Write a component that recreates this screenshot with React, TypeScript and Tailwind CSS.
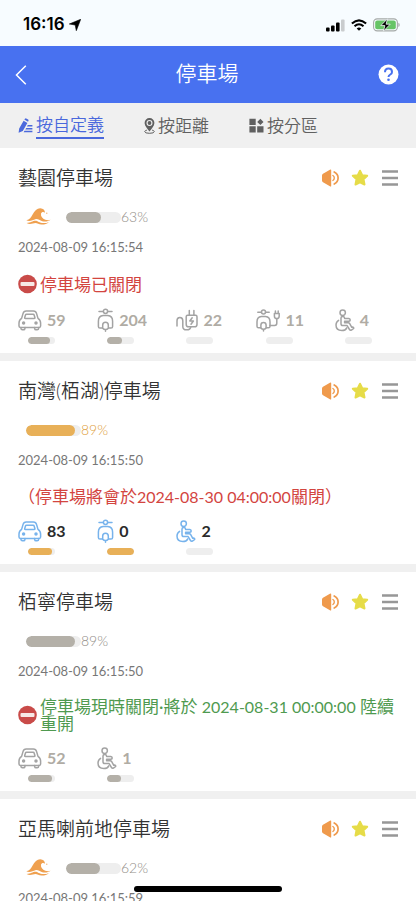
import type { ReactNode } from 'react';
import clsx from 'clsx';

type SpotType = 'car' | 'moto' | 'ev' | 'evMoto' | 'disabled';

interface Spot {
    type: SpotType;
    count: number;
    level: number;
}

interface CarPark {
    name: string;
    wave?: boolean;
    open?: boolean;
    percent: number;
    updated: string;
    message?: string;
    messageColor?: 'red' | 'green';
    closedSign?: boolean;
    spots: Spot[];
}

const carParks: CarPark[] = [
    {
        name: '藝園停車場',
        wave: true,
        percent: 63,
        updated: '2024-08-09 16:15:54',
        message: '停車場已關閉',
        messageColor: 'red',
        closedSign: true,
        spots: [
            { type: 'car', count: 59, level: 83 },
            { type: 'moto', count: 204, level: 54 },
            { type: 'ev', count: 22, level: 0 },
            { type: 'evMoto', count: 11, level: 0 },
            { type: 'disabled', count: 4, level: 0 },
        ],
    },
    {
        name: '南灣(栢湖)停車場',
        open: true,
        percent: 89,
        updated: '2024-08-09 16:15:50',
        message: '（停車場將會於2024-08-30 04:00:00關閉）',
        messageColor: 'red',
        spots: [
            { type: 'car', count: 83, level: 88 },
            { type: 'moto', count: 0, level: 100 },
            { type: 'disabled', count: 2, level: 0 },
        ],
    },
    {
        name: '栢寧停車場',
        percent: 89,
        updated: '2024-08-09 16:15:50',
        message: '停車場現時關閉·將於 2024-08-31 00:00:00 陸續重開',
        messageColor: 'green',
        closedSign: true,
        spots: [
            { type: 'car', count: 52, level: 90 },
            { type: 'disabled', count: 1, level: 50 },
        ],
    },
    {
        name: '亞馬喇前地停車場',
        wave: true,
        percent: 62,
        updated: '2024-08-09 16:15:59',
        spots: [],
    },
];

function LineIcon({ width, height, children }: { width: number; height: number; children: ReactNode }) {
    return (
        <svg
            width={width}
            height={height}
            viewBox={`0 0 ${width} ${height}`}
            fill="none"
            stroke="currentColor"
            strokeWidth="1.5"
            strokeLinecap="round"
            strokeLinejoin="round"
            className="shrink-0"
        >
            {children}
        </svg>
    );
}

const spotIcons: Record<SpotType, ReactNode> = {
    car: (
        <LineIcon width={24} height={21}>
            <path d="M3.600 8.400 5 3.600Q5.700 1 8.200 1h7.200q2.500 0 3.200 2.600l1.400 4.800q2.600 1.600 2.600 4.600v3q0 1.400-1.400 1.400H2.400Q1 17.400 1 16v-3q0-3 2.600-4.600z" />
            <path d="M8.500 4.300h6.600q.8 0 1 .8l.8 2.500q.2.800-.7.800H7.400q-.9 0-.7-.8l.8-2.500q.2-.8 1-.8z" />
            <path d="M3 17.600v.8q0 1.400 1.400 1.400h1.200q1.200 0 1.300-1.200l.1-1M20.600 17.600v.8q0 1.400-1.400 1.400H18q-1.200 0-1.300-1.200l-.1-1" />
            <circle cx="5.600" cy="13" r="1" fill="currentColor" />
            <circle cx="18" cy="13" r="1" fill="currentColor" />
        </LineIcon>
    ),
    moto: (
        <LineIcon width={17} height={24}>
            <path d="M2 3.400h4.200M10.800 3.400H15" />
            <circle cx="8.500" cy="3.300" r="2.100" />
            <path d="M5.200 20H3q-1.600 0-1.600-1.600v-5.200q0-5.200 4.800-5.600h4.600q4.800.4 4.800 5.600v5.200q0 1.600-1.600 1.600h-2.200" />
            <path d="M5.700 20.200V17q0-2.800 2.800-2.800t2.800 2.800v3.200q-1.100 1.300-2.800 1.300t-2.800-1.300zM8.500 21.600v1.600" />
        </LineIcon>
    ),
    ev: (
        <LineIcon width={22} height={22}>
            <path d="M1 17v-5.200q0-3.400 2.900-3.400t2.900 3.400v5.600q0 3.400 3.800 3.400t4.200-3" />
            <path d="M11.600 6.200h8q1.400 0 1.400 1.600v7.400q0 2.600-2.400 2.600h-6q-2.400 0-2.400-2.600V7.800q0-1.600 1.400-1.600zM13.300 6V1.600M17.900 6V1.600" />
            <path d="M16.200 8.800 13.800 12h3.600L15 15.200" />
        </LineIcon>
    ),
    evMoto: (
        <LineIcon width={25} height={23}>
            <path d="M1.800 3.200H5.400M9.600 3.200h3.600" />
            <circle cx="7.500" cy="3" r="2" />
            <path d="M4.600 18.800H2.600Q1 18.800 1 17.200v-4.400q0-4.800 4.400-5.200h4.200q4.400.4 4.400 5.200v4.400q0 1.600-1.600 1.600h-2" />
            <path d="M4.900 19v-3q0-2.600 2.600-2.600t2.600 2.600v3q-1 1.300-2.600 1.300T4.900 19zM7.500 20.400V22" />
            <path d="M14 16.400h4.600q2.200 0 2.200-2.200V9.600M18.400 4.600h4.800v2.400q0 2.600-2.400 2.600t-2.400-2.600zM19.400 4.400V2M22.200 4.400V2" />
        </LineIcon>
    ),
    disabled: (
        <LineIcon width={20} height={23}>
            <circle cx="7.700" cy="3.700" r="2.700" />
            <path d="M6 9q0-1.400 1.700-1.400T9.600 9v.6h4.200q1.400.2 1.400 1.300t-1.400 1.300H9.600v1.600h3.600q1 0 1.500.9l2.100 3.600 1-.3q1.200.4.900 1.500l-2.300 1.600q-1.200.5-1.900-.6l-2.400-3.900H7.800Q6 16.600 6 14.800z" />
            <path d="M3.600 11.400Q1 13 1 16.100q0 5.500 5.900 5.500 3.500 0 4.900-2.800" />
        </LineIcon>
    ),
};

function WaveIcon() {
    return (
        <svg width="25" height="17" viewBox="0 0 25 17" fill="#efa04f" className="mr-[15px] mb-[2px] shrink-0">
            <path d="M.3 12.200C3.800 11.400 5 9.400 6.600 6.400 8.600 2.600 11.200.1 14.300.2c2.900.1 4.700 2 4.700 4.500-1.300-1.200-3.600-1-4 1-.4 2.600 1.500 5 4.300 6 1.900.6 3.700.5 5.300.1-2.300 1.600-5.400 2.300-8.300 1.400-2.800-.9-4.300-2.500-6.900-2-2.500.5-5.600 2.800-9.100 1z" />
            <path d="M.6 15c4.300 0 6-2.200 8.700-2.200 2.500 0 3.800 2.300 8.400 2.300 2.100 0 3.600-.4 5.200-.9-1.900 1.900-4.600 2.500-7.300 2.400-2.800-.1-4.200-1.600-6.200-1.600-2.400 0-5.200 2.300-8.800 0z" />
            <circle cx="20.800" cy="5.200" r=".6" />
        </svg>
    );
}

function ClosedSign() {
    return (
        <svg width="19" height="20" viewBox="0 0 19 20" className="shrink-0">
            <circle cx="9.500" cy="10" r="9.300" fill="#c94b49" />
            <rect x="2.500" y="8" width="14" height="4" rx="1" fill="#f7e9e6" />
        </svg>
    );
}

function CardActions() {
    return (
        <div className="flex items-center gap-3">
            <button type="button" aria-label="語音">
                <svg width="18" height="18" viewBox="0 0 18 18" fill="none" stroke="#ef9a4c" strokeLinecap="round" className="block">
                    <path d="M2 4.800 8.900.7Q10.200 0 10.200 1.300v15.400q0 1.300-1.300.6L2 13.200Q1 12.700 1 11.600V6.400q0-1.100 1-1.600z" fill="#ef9a4c" stroke="none" />
                    <path d="M11.900 6.500q1.400.8 1.400 2.500t-1.400 2.500" strokeWidth="1.400" />
                    <path d="M13.200 3q3.900 1.900 3.900 6t-3.900 6" strokeWidth="1.700" />
                </svg>
            </button>
            <button type="button" aria-label="收藏">
                <svg width="18" height="18" viewBox="0 0 18 18" fill="#e6dc48" stroke="#e6dc48" strokeWidth="2" strokeLinejoin="round" className="block">
                    <path d="m9 1.700 2.200 4.500 5 .6-3.700 3.500 1 5.200L9 13.300l-4.500 2.200 1-5.200L1.800 6.800l5-.6z" />
                </svg>
            </button>
            <button type="button" aria-label="選單">
                <svg width="18" height="18" viewBox="0 0 18 18" fill="#979797" className="block">
                    <path d="M1 1.300h16v2.400H1zM1 7.800h16v2.400H1zM1 14.300h16v2.400H1z" />
                </svg>
            </button>
        </div>
    );
}

function Bar({ level, open, className }: { level: number; open?: boolean; className: string }) {
    return (
        <div className={clsx('overflow-hidden rounded-full bg-[#eeeeee]', className)}>
            <div
                className={clsx('h-full rounded-full', open ? 'bg-[#e8b058]' : 'bg-[#b4b0a8]')}
                style={{ width: `${level}%` }}
            />
        </div>
    );
}

// Dates are set a little smaller than the Chinese text around them
function Message({ text, color }: { text: string; color?: 'red' | 'green' }) {
    const parts = text.split(/([\d-]+ [\d:]+)/);

    return (
        <p className={clsx('text-[17px] leading-[17px]', color === 'green' ? 'text-[#4f9a50]' : 'text-[#d3453f]')}>
            {parts.map((part, i) => (i % 2 ? <span key={i} className="text-base leading-[17px]">{part}</span> : part))}
        </p>
    );
}

function CarParkCard({ park }: { park: CarPark }) {
    return (
        <li className="bg-white pt-4 pb-[9px]">
            <div className="flex h-7 items-center justify-between pr-[17px] pl-[18px]">
                <h2 className="text-[19px] leading-7 font-[350] text-[#333]">{park.name}</h2>
                <CardActions />
            </div>

            <div className="mt-[15px] flex h-5 items-center pl-[26px]">
                {park.wave && <WaveIcon />}
                <Bar level={park.percent} open={park.open} className="h-[11px] w-[55px]" />
                <span className={clsx('text-sm font-light', park.open ? 'text-[#e0a03c]' : 'text-[#928e87]')}>
                    {park.percent}%
                </span>
            </div>

            <p className="mt-[10px] pl-[18px] text-[13px] leading-5 text-[#777]">{park.updated}</p>

            {park.message && (
                <div className="mt-[17px] flex min-h-[18px] items-center gap-[3px] pr-4 pl-[18px]">
                    {park.closedSign && <ClosedSign />}
                    <Message text={park.message} color={park.messageColor} />
                </div>
            )}

            {park.spots.length > 0 && (
                <ul className="mt-[14px] grid grid-cols-5 pr-[2px] pl-[18px]">
                    {park.spots.map((spot) => (
                        <li key={spot.type}>
                            <div className={clsx('flex h-6 items-center gap-[5px]', park.open ? 'text-[#77b3ec]' : 'text-[#a3a3a3]')}>
                                {spotIcons[spot.type]}
                                <span className={clsx('text-base font-bold', park.open ? 'text-[#2b2b2b]' : 'text-[#b0aca4]')}>
                                    {spot.count}
                                </span>
                            </div>
                            <Bar level={spot.level} open={park.open} className="mt-[5px] ml-[10px] h-[7px] w-[27px]" />
                        </li>
                    ))}
                </ul>
            )}
        </li>
    );
}

function StatusBar() {
    return (
        <div className="flex h-[46px] shrink-0 items-center justify-between bg-[#f7fcff] pt-1 pr-4 pl-[23px] text-black">
            <div className="flex items-center gap-1">
                <span className="font-['Inter',sans-serif] text-[17px] font-semibold">16:16</span>
                <svg width="12" height="12" viewBox="0 0 12 12" fill="currentColor">
                    <path d="M11.700.3 7.300 11.700 6.200 6 .3 5z" stroke="currentColor" strokeWidth=".6" strokeLinejoin="round" />
                </svg>
            </div>
            <div className="flex items-center gap-[6px]">
                <svg width="19" height="13" viewBox="0 0 19 13" fill="currentColor">
                    <rect y="8.500" width="3.600" height="4" rx="1" />
                    <rect x="5" y="6.500" width="3.600" height="6" rx="1" />
                    <rect x="10" y="3.500" width="3.600" height="9" rx="1" />
                    <rect x="15" y=".5" width="3.600" height="12" rx="1" fill="#c9ccce" />
                </svg>
                <svg width="16" height="12" viewBox="0 0 16 12" fill="none" stroke="currentColor" strokeWidth="2.100">
                    <path d="M.9 4.500q7.100-6.400 14.200 0M3.500 7.200q4.500-3.900 9 0" />
                    <path d="M8 11.700 5.700 9.400q2.300-1.900 4.600 0z" fill="currentColor" stroke="none" />
                </svg>
                <svg width="27" height="14" viewBox="0 0 27 14">
                    <rect x=".6" y=".9" width="23.800" height="12" rx="3.600" fill="none" stroke="#a5a9a8" strokeWidth="1.100" />
                    <rect x="2.200" y="2.500" width="20.600" height="8.800" rx="2" fill="#66c466" />
                    <path d="M25.400 4.800q1.300.5 1.300 2.100t-1.300 2.100z" fill="#a5a9a8" />
                    <path d="M14.500.8 7.800 7.600h4.100l-1.500 5.600 6.800-7h-4.100z" fill="#000" stroke="#f7fcff" strokeWidth=".8" />
                </svg>
            </div>
        </div>
    );
}

function Tabs() {
    return (
        <nav className="flex h-[45px] shrink-0 items-center gap-10 bg-[#f0f0f0] pl-[18px] text-[17px] font-[350] text-[#606060]">
            <button type="button" className="flex items-center gap-[3px] text-[#4a68dc]">
                <svg width="15" height="15" viewBox="0 0 15 15" fill="currentColor">
                    <path d="m5.600 2.800 3.800 2.200-4.600 7.900L.6 14.800l.6-4.200zM6.300 1.600 7 .7q.5-.6 1.200-.2l1.900 1.100q.7.500.4 1.200l-.5 1z" />
                    <path d="M9.800 7h4.600v1.500H8.900zM8.200 9.900h6.200v1.500H7.300zM6.500 12.800h7.900v1.500H5.600z" />
                </svg>
                <span className="border-b-2 border-[#4a68dc] leading-[25px]">按自定義</span>
            </button>
            <button type="button" className="flex items-center gap-[3px]">
                <svg width="11" height="16" viewBox="0 0 11 16" fill="currentColor">
                    <path fillRule="evenodd" d="M5.500.1a4.900 4.900 0 0 1 4.900 4.900c0 3-2.800 5.600-4.900 8.600C3.400 10.600.6 8 .6 5A4.900 4.900 0 0 1 5.500.1zm0 1.900a3 3 0 1 0 0 6 3 3 0 0 0 0-6z" />
                    <circle cx="5.500" cy="5" r="1.900" />
                    <path d="M2.900 12.100Q.7 12.700.7 13.600q0 1.700 4.800 1.700t4.800-1.700q0-.9-2.200-1.500" fill="none" stroke="currentColor" />
                </svg>
                <span>按距離</span>
            </button>
            <button type="button" className="flex items-center gap-[3px]">
                <svg width="15" height="15" viewBox="0 0 15 15" fill="currentColor">
                    <path d="M.4.800h6.300v6.200H.4zM.4 8.300h6.300v6.200H.4zM8.200 8.300h6.300v6.200H8.200zM11.400.7l3.100 3.200-3.100 3.200-3.200-3.200z" />
                </svg>
                <span>按分區</span>
            </button>
        </nav>
    );
}

export default function App() {
    return (
        <div className="flex h-screen flex-col bg-white font-['Lato','Noto_Sans_CJK_TC',sans-serif]">
            <StatusBar />

            <header className="flex h-[57px] shrink-0 items-center justify-between bg-[#4871f0] pr-[17px] pl-[15px] text-white">
                <button type="button" aria-label="返回" className="w-[21px]">
                    <svg width="12" height="20" viewBox="0 0 12 20" fill="none" stroke="currentColor" strokeWidth="1.500" className="block">
                        <path d="M10.800.8 1.500 10l9.300 9.200" />
                    </svg>
                </button>
                <h1 className="pb-1 text-[21px] leading-7 font-[350]">停車場</h1>
                <button type="button" aria-label="說明">
                    <svg width="21" height="21" viewBox="0 0 21 21" className="block">
                        <circle cx="10.500" cy="10.500" r="10" fill="#fff" />
                        <path d="M7 8.200q0-3.600 3.500-3.600T14 7.900q0 1.600-1.700 2.600-1.800 1.100-1.800 2.600" fill="none" stroke="#4871f0" strokeWidth="2" />
                        <circle cx="10.500" cy="15.800" r="1.300" fill="#4871f0" />
                    </svg>
                </button>
            </header>

            <Tabs />

            <main className="min-h-0 flex-1 overflow-y-auto bg-[#f0f0f0] [scrollbar-width:none]">
                <ul className="flex flex-col gap-2">
                    {carParks.map((park) => (
                        <CarParkCard key={park.name} park={park} />
                    ))}
                </ul>
            </main>

            <div className="fixed bottom-[9px] left-1/2 h-[6px] w-[148px] -translate-x-1/2 rounded-full bg-black" />
        </div>
    );
}
